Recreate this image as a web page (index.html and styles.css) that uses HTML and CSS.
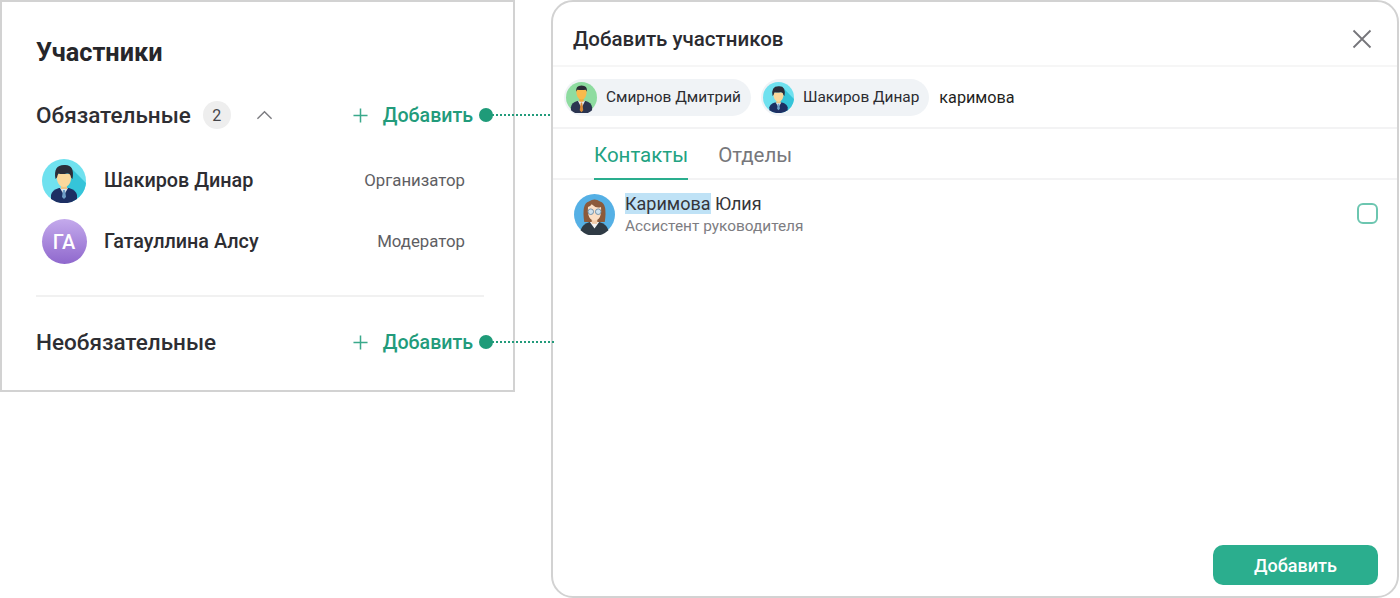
FILE: index.html
```html
<!DOCTYPE html>
<html lang="ru">
<head>
<meta charset="utf-8">
<title>Участники</title>
<link rel="stylesheet" href="styles.css">
</head>
<body>
<svg class="defs" xmlns="http://www.w3.org/2000/svg">
  <symbol id="av-dinar" viewBox="0 0 44 44">
    <circle cx="22" cy="22" r="22" fill="#6fe1ef"/>
    <path d="M29 9 L44 24 A22 22 0 0 1 30 42.500 L22 36Z" fill="#35c4d9"/>
    <path d="M9 40 V36 Q10 31 17 29 H27 Q34 31 35 36 V40 A22 22 0 0 1 9 40Z" fill="#1d2f63"/>
    <path d="M18 29 L22 36 L26 29Z" fill="#dfe8ee"/>
    <path d="M21 31 h2 l1 7 -2 2 -2-2Z" fill="#6f9fc8"/>
    <rect x="19" y="24" width="6" height="6" fill="#eec484"/>
    <path d="M14.500 15 Q14.500 27.500 22 28 Q29.500 27.500 29.500 15Z" fill="#fbd89c"/>
    <path d="M13.500 20 Q11 6 22 6 Q33 5 30.500 20 L29 18.500 Q28.500 14 25 14.500 Q20 15.500 16.500 14.500 Q15.500 16 15 18.500Z" fill="#2b2d3a"/>
  </symbol>
  <symbol id="av-dmitry" viewBox="0 0 44 44">
    <circle cx="22" cy="22" r="22" fill="#8edca0"/>
    <path d="M7 40 V36 Q8 29 16 27 H28 Q36 29 37 36 V40 A22 22 0 0 1 7 40Z" fill="#2b3550"/>
    <path d="M17 27 L22 37 L27 27Z" fill="#e9edf0"/>
    <path d="M21 29 h2 l1.500 11 -2.500 3 -2.500-3Z" fill="#d98a35"/>
    <rect x="19" y="21" width="6" height="7" fill="#eea83c"/>
    <path d="M14.500 11 Q14.500 25 22 25 Q29.500 25 29.500 11Z" fill="#f9ba4c"/>
    <path d="M14.500 14 Q13.500 5 22 5 Q31 5 29.500 14 L28 11 Q22 12 16 11Z" fill="#2a2c36"/>
  </symbol>
  <symbol id="av-yulia" viewBox="0 0 44 44">
    <circle cx="22" cy="22" r="22" fill="#55b0e5"/>
    <path d="M11 30 Q8 10 16 8 Q22 4 28 8 Q36 10 33 30Z" fill="#8b5a3b"/>
    <path d="M7 39 Q9 32 17 30 H27 Q35 32 37 39 A22 22 0 0 1 7 39Z" fill="#2f3b45"/>
    <path d="M17 30 L22 37 L27 30Z" fill="#f3f5f6"/>
    <rect x="19" y="25" width="6" height="7" fill="#f0cba9"/>
    <path d="M15 14 Q14 28 22 28.500 Q30 28 29 14 Q24 16 19 11 Q17 14 15 14Z" fill="#fbdfc5"/>
    <circle cx="18" cy="19" r="3" fill="#cfe2ee" stroke="#6f8ea6" stroke-width="1"/>
    <circle cx="26" cy="19" r="3" fill="#cfe2ee" stroke="#6f8ea6" stroke-width="1"/>
  </symbol>
</svg>

<main class="canvas">
  <section class="panel">
    <h1 class="panel-title">Участники</h1>

    <div class="group-row group-first">
      <h2 class="group-name">Обязательные</h2>
      <span class="count">2</span>
      <svg class="chevron" viewBox="0 0 18 10"><path d="M1.500 9 L9 1.500 L16.500 9"/></svg>
      <div class="add-link">
        <svg class="plus" viewBox="0 0 16 16"><path d="M8 0.500 V15.500 M0.500 8 H15.500"/></svg>
        <span>Добавить</span>
        <span class="connector connector-short"></span>
      </div>
    </div>

    <ul class="people">
      <li class="person">
        <span class="person-av"><svg class="av-img"><use href="#av-dinar"/></svg></span>
        <span class="person-name">Шакиров Динар</span>
        <span class="person-role">Организатор</span>
      </li>
      <li class="person">
        <span class="person-av"><span class="av-initials">ГА</span></span>
        <span class="person-name">Гатауллина Алсу</span>
        <span class="person-role">Модератор</span>
      </li>
    </ul>

    <hr class="divider">

    <div class="group-row">
      <h2 class="group-name">Необязательные</h2>
      <div class="add-link">
        <svg class="plus" viewBox="0 0 16 16"><path d="M8 0.500 V15.500 M0.500 8 H15.500"/></svg>
        <span>Добавить</span>
        <span class="connector connector-long"></span>
      </div>
    </div>
  </section>

  <section class="modal">
    <header class="modal-head">
      <h2 class="modal-title">Добавить участников</h2>
      <svg class="close" viewBox="0 0 20 20"><path d="M1.500 1.500 L18.500 18.500 M18.500 1.500 L1.500 18.500"/></svg>
    </header>

    <div class="tokens">
      <span class="chip"><svg class="chip-av"><use href="#av-dmitry"/></svg>Смирнов Дмитрий</span>
      <span class="chip"><svg class="chip-av"><use href="#av-dinar"/></svg>Шакиров Динар</span>
      <span class="query">каримова</span>
    </div>

    <nav class="tabs">
      <span class="tab tab-active">Контакты</span>
      <span class="tab">Отделы</span>
    </nav>

    <div class="results">
      <div class="result">
        <svg class="result-av"><use href="#av-yulia"/></svg>
        <div class="result-text">
          <div class="result-name"><mark class="hit">Каримова</mark> Юлия</div>
          <div class="result-sub">Ассистент руководителя</div>
        </div>
        <span class="check"></span>
      </div>
    </div>

    <footer class="modal-foot">
      <button class="primary">Добавить</button>
    </footer>
  </section>
</main>
</body>
</html>
```

FILE: styles.css
```css
* { box-sizing: border-box; }
html, body { margin: 0; padding: 0; height: 100%; background: #fff; overflow: hidden; }
body { font-family: Roboto, "Noto Sans", sans-serif; color: #2b2b30; }
.defs { display: none; }

.canvas { display: flex; align-items: flex-start; gap: 36px; width: 1400px; height: 598px; }

/* Left panel */
.panel {
  position: relative;
  width: 515px; height: 392px; flex: none;
  border: 2px solid #d2d2d2;
  padding: 0 29px 0 34px;
}
.panel-title { margin: 36px 0 0; font-size: 25.300px; line-height: 30px; font-weight: 700; color: #26262a; }
.group-row { display: flex; align-items: center; height: 34px; }
.group-first { margin-top: 30px; }
.group-name { margin: 0; font-size: 22.500px; line-height: 30px; font-weight: 500; color: #2e2e33; }
.count {
  width: 28px; height: 28px; margin-left: 12px; border-radius: 50%;
  background: #eeeeee; color: #45454a; font-size: 16px;
  display: flex; align-items: center; justify-content: center;
}
.chevron { width: 17px; height: 10px; margin-left: 25px; fill: none; stroke: #7c7c80; stroke-width: 1.500; }
.add-link {
  position: relative;
  margin-left: auto; margin-right: 11px; display: flex; align-items: center; gap: 15px;
  color: #229b7b; font-size: 19.600px; font-weight: 500;
}
.plus { width: 15px; height: 15px; fill: none; stroke: #3aa98b; stroke-width: 1.600; }

/* Connectors run over the panel and modal borders */
.connector { position: absolute; left: calc(100% + 12px); top: 50%; height: 0; border-top: 2px dotted #229b7b; margin-top: -1px; }
.connector::before {
  content: ""; position: absolute; left: -6px; top: -8px;
  width: 14px; height: 14px; border-radius: 50%; background: #1f9b79;
}
.connector-short { width: 65px; }
.connector-long { width: 69px; }

.people { list-style: none; margin: 18px 0 0; padding: 0; }
.person { display: flex; align-items: center; height: 61px; padding-left: 5px; padding-right: 19px; }
.person-av { width: 46px; height: 46px; display: flex; align-items: center; justify-content: center; flex: none; }
.av-img { width: 44px; height: 44px; display: block; }
.av-initials {
  width: 45px; height: 45px; border-radius: 50%;
  background: linear-gradient(180deg, #c4aaec, #8f68cd);
  color: #fff; font-size: 20px; font-weight: 500;
  display: flex; align-items: center; justify-content: center;
}
.person-name { margin-left: 17px; font-size: 19.800px; font-weight: 500; color: #2d2d32; }
.person-role { margin-left: auto; padding-bottom: 2px; font-size: 16.800px; color: #5e5e63; }

.divider { border: 0; border-top: 2px solid #f1f1f1; margin: 23px 0 28px; }

/* Modal */
.modal {
  width: 848px; height: 598px; flex: none;
  display: flex; flex-direction: column;
  border: 2px solid #d2d2d2; border-radius: 22px;
}
.modal-head {
  height: 65px; flex: none; border-bottom: 2px solid #f6f6f6;
  display: flex; align-items: center; justify-content: space-between;
  padding: 10px 25px 0 20px;
}
.modal-title { margin: 0; font-size: 20.500px; font-weight: 500; color: #2b2b30; }
.close { width: 20px; height: 20px; fill: none; stroke: #75757a; stroke-width: 1.800; }
.tokens {
  height: 62px; flex: none; border-bottom: 2px solid #f3f3f4;
  display: flex; align-items: center; gap: 10px; padding: 0 0 0 11px;
}
.chip {
  height: 37px; padding: 0 10px 0 2px; border-radius: 19px;
  background: #f0f3f6; color: #2b2b30; font-size: 15.400px;
  display: flex; align-items: center; gap: 9px;
}
.chip-av { width: 31px; height: 31px; display: block; }
.query { font-size: 16.200px; color: #1f1f22; margin-top: 1px; }

.tabs {
  height: 51px; flex: none; border-bottom: 2px solid #f3f3f4;
  display: flex; gap: 30px; padding: 0 0 0 41px;
}
.tab { height: 51px; padding-top: 13px; font-size: 20.500px; line-height: 26px; color: #77777b; }
.tab-active { color: #22a281; border-bottom: 2px solid #2aae8e; }

.results { flex: 1; padding: 13px 19px 0 21px; }
.result { display: flex; align-items: flex-start; }
.result-av { width: 41px; height: 41px; margin-top: 1px; flex: none; display: block; }
.result-text { margin-left: 10px; flex: 1; }
.result-name { font-size: 18px; line-height: 21px; color: #35353a; }
.hit { background: #bfe2f6; color: inherit; }
.result-sub { margin-top: 2px; font-size: 15.400px; line-height: 20px; color: #7d7d82; }
.check { width: 21px; height: 21px; margin-top: 10px; border: 2px solid #6cc6b0; border-radius: 6px; flex: none; }

.modal-foot { flex: none; display: flex; justify-content: flex-end; padding: 0 19px 11px 0; }
.primary {
  width: 165px; height: 40px; border: 0; border-radius: 10px;
  background: #2bae8e; color: #fff; font: 500 18px Roboto, sans-serif;
}
```
